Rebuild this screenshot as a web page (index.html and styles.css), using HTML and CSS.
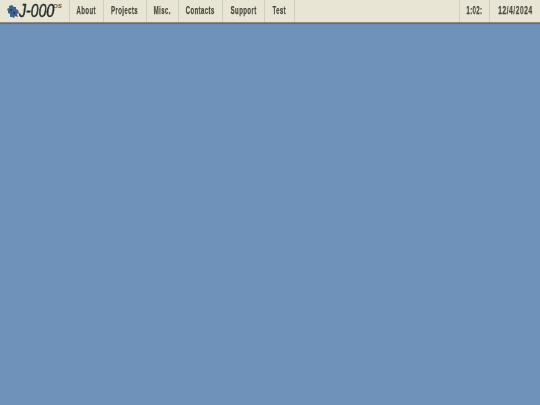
FILE: index.html
```html
<!DOCTYPE html>
<html>
<head>
  <link rel="stylesheet" href="styles.css">
</head>
<body>
  <div class="menu-bar">
    <div class="logo">
      <svg class="logo-icon" width="12" height="13" viewBox="0 0 12 13">
        <path d="M2 1 L5 0 L7 2 L9 2 L9 4 L11 5 L12 8 L10 9 L11 12 L8 11 L7 13 L5 12 L3 12 L3 9 L1 8 L1 6 L0 4 L2 3 Z" fill="#3f618c"/>
        <circle cx="4" cy="5" r="1" fill="#22344c"/>
        <circle cx="7" cy="8" r="1" fill="#22344c"/>
      </svg>
      <span class="logo-name">J-000</span><span class="logo-os">OS</span>
    </div>
    <div class="menu-item about"><span>About</span></div>
    <div class="menu-item projects"><span>Projects</span></div>
    <div class="menu-item misc"><span>Misc.</span></div>
    <div class="menu-item contacts"><span>Contacts</span></div>
    <div class="menu-item support"><span>Support</span></div>
    <div class="menu-item test"><span>Test</span></div>
    <div class="spacer"></div>
    <div class="menu-item clock"><span>1:02:</span></div>
    <div class="menu-item date"><span>12/4/2024</span></div>
  </div>
</body>
</html>
```

FILE: styles.css
```css
html, body {
  height: 100%;
}

body {
  margin: 0;
  background-color: #6f92ba;
  overflow: hidden;
}

.menu-bar {
  display: flex;
  height: 22px;
  background-color: #e8e5d4;
  border-bottom: 1px solid #8d8c80;
  box-shadow: 0 1px 1px rgba(60, 70, 90, 0.45);
  color: #4a493f;
  white-space: nowrap;
}

.logo {
  display: flex;
  align-items: center;
  width: 70px;
  padding-left: 7px;
  box-sizing: border-box;
  border-right: 1px solid #d0cebd;
  color: #22262c;
}

.logo-icon {
  flex-shrink: 0;
}

.logo-name {
  display: inline-block;
  width: 35px;
  font-family: "Liberation Sans", sans-serif;
  font-style: italic;
  font-size: 19px;
  line-height: 22px;
  -webkit-text-stroke: 0.4px #22262c;
  transform: scaleX(0.74);
  transform-origin: left center;
  will-change: transform;
}

.logo-os {
  font-family: "Liberation Sans", sans-serif;
  font-style: italic;
  font-weight: bold;
  font-size: 6px;
  align-self: flex-start;
  margin-top: 3px;
  margin-left: -1px;
  color: #56554a;
}

.menu-item {
  display: flex;
  align-items: center;
  justify-content: center;
  box-sizing: border-box;
  padding-bottom: 2px;
  border-right: 1px solid #d0cebd;
  font-family: "Liberation Sans", sans-serif;
  font-weight: bold;
  font-size: 10px;
}

.menu-item span {
  display: inline-block;
  letter-spacing: 0.7px;
  -webkit-text-stroke: 0.25px #4a493f;
  transform: scaleX(0.6);
  will-change: transform;
}

.about { width: 34px; }
.projects { width: 43px; }
.misc { width: 32px; }
.contacts { width: 44px; }
.support { width: 42px; }
.test { width: 30px; }

.spacer {
  flex: 1;
  border-right: 1px solid #d0cebd;
}

.clock { width: 30px; }
.date { width: 50px; border-right: none; }
.date span { transform: scaleX(0.68); }
```
